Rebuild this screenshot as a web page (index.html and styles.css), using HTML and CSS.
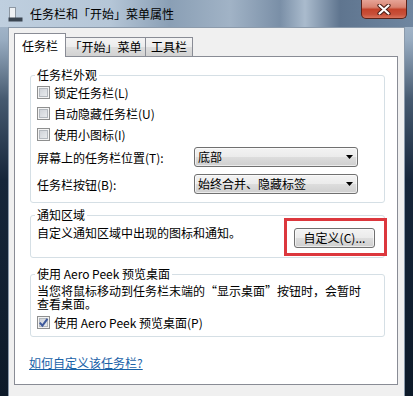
FILE: index.html
```html
<!DOCTYPE html>
<html lang="zh-CN">
<head>
    <meta charset="UTF-8">
    <meta name="viewport" content="width=device-width, initial-scale=1.0">
    <title>任务栏和「开始」菜单属性</title>
    <link rel="stylesheet" href="styles.css">
</head>
<body>
    <div class="window">
        <div class="titlebar">
            <svg class="app-icon" width="15" height="15" viewBox="0 0 15 15">
                <rect x="1.5" y="0.5" width="6" height="11" fill="#eef1f4" stroke="#8d97a2"/>
                <rect x="0.5" y="10.5" width="14" height="4" fill="#3a4551"/>
            </svg>
            <span class="title">任务栏和「开始」菜单属性</span>
            <div class="close-btn">
                <svg width="14" height="11" viewBox="0 0 14 11">
                    <path d="M2.5 1.5 L11.5 9.5 M11.5 1.5 L2.5 9.5" stroke="#4a1c14" stroke-width="4.2" stroke-linecap="round"/>
                    <path d="M2.5 1.5 L11.5 9.5 M11.5 1.5 L2.5 9.5" stroke="#fff" stroke-width="2.2" stroke-linecap="round"/>
                </svg>
            </div>
        </div>

        <div class="client">
            <div class="tabs">
                <div class="tab active">任务栏</div>
                <div class="tab tab-start">「开始」菜单</div>
                <div class="tab tab-tools">工具栏</div>
            </div>

            <div class="panel">
                <!-- 任务栏外观 -->
                <fieldset class="group group-look">
                    <legend>任务栏外观</legend>
                    <div class="check-row"><span class="checkbox"></span>锁定任务栏(L)</div>
                    <div class="check-row"><span class="checkbox"></span>自动隐藏任务栏(U)</div>
                    <div class="check-row"><span class="checkbox"></span>使用小图标(I)</div>
                    <div class="combo-rows">
                        <div class="combo-row">
                            <span class="combo-label">屏幕上的任务栏位置(T):</span>
                            <div class="combo">
                                <span>底部</span>
                                <svg class="arrow" width="7" height="4" viewBox="0 0 7 4"><polygon points="0,0 7,0 3.5,4" fill="#000"/></svg>
                            </div>
                        </div>
                        <div class="combo-row">
                            <span class="combo-label">任务栏按钮(B):</span>
                            <div class="combo">
                                <span>始终合并、隐藏标签</span>
                                <svg class="arrow" width="7" height="4" viewBox="0 0 7 4"><polygon points="0,0 7,0 3.5,4" fill="#000"/></svg>
                            </div>
                        </div>
                    </div>
                </fieldset>

                <!-- 通知区域 -->
                <fieldset class="group group-notify">
                    <legend>通知区域</legend>
                    <div class="notify-row">
                        <span class="notify-text">自定义通知区域中出现的图标和通知。</span>
                        <div class="btn-wrap">
                            <div class="btn">自定义(C)...</div>
                            <div class="highlight"></div>
                        </div>
                    </div>
                </fieldset>

                <!-- Aero Peek -->
                <fieldset class="group group-peek">
                    <legend>使用 Aero Peek 预览桌面</legend>
                    <p class="peek-text">当您将鼠标移动到任务栏末端的“显示桌面”按钮时，会暂时<br>查看桌面。</p>
                    <div class="check-row">
                        <span class="checkbox checked">
                            <svg width="11" height="11" viewBox="0 0 11 11"><path d="M1.8 5.6 L4.4 8.6 L9.4 1.8" fill="none" stroke="#3f5a9c" stroke-width="2"/></svg>
                        </span>使用 Aero Peek 预览桌面(P)
                    </div>
                </fieldset>

                <a class="help-link" href="#">如何自定义该任务栏?</a>
            </div>
        </div>
    </div>
</body>
</html>
```

FILE: styles.css
```css
/* 窗口 */
body {
    margin: 0;
    font-family: "Noto Sans CJK SC", sans-serif;
    font-size: 12px;
    color: #000;
    background: #0e1823;
    overflow: hidden;
}
.window {
    width: 413px;
    height: 396px;
    box-sizing: border-box;
    padding: 0 8px;
    display: flex;
    flex-direction: column;
    background: linear-gradient(to bottom, #b3c4d6 0, #98acc1 40px, #45596f 100px, #16263a 180px, #0d1a29 100%);
}
.titlebar {
    height: 27px;
    margin: 0 -8px;
    padding-left: 8px;
    display: flex;
    align-items: center;
    background: linear-gradient(to right, #bfcfdf 0, #b5c6d7 110px, #8a9fb5 170px, #a1b3c6 230px, #7a8fa7 280px, #aabbcd 305px, #5f758f 340px, #6f86a0 100%);
}
.app-icon {
    margin-top: 1px;
}
.title {
    margin-left: 7px;
    line-height: 14px;
}
.close-btn {
    margin-left: auto;
    margin-right: 6px;
    align-self: flex-start;
    width: 46px;
    height: 19px;
    box-sizing: border-box;
    border: 1px solid #5a2219;
    border-top: none;
    border-radius: 0 0 5px 5px;
    background: linear-gradient(to bottom, #e6a496 0, #d88371 40%, #c4432b 52%, #c8503a 80%, #d8735c 100%);
    display: flex;
    align-items: center;
    justify-content: center;
}

/* 客户区 */
.client {
    flex: 1;
    background: #f0f0f0;
    border: 1px solid #8b9aab;
    border-bottom: none;
    padding: 5px 6px 0 5px;
}
.tabs {
    display: flex;
    align-items: flex-end;
    height: 23px;
}
.tab {
    height: 19px;
    box-sizing: border-box;
    border: 1px solid #898c95;
    border-bottom: none;
    line-height: 18px;
    text-align: center;
    background: linear-gradient(to bottom, #f4f4f4 0, #ececec 50%, #dedede 50%, #d2d2d2 100%);
    margin-left: -1px;
}
.tab.active {
    position: relative;
    z-index: 1;
    height: 24px;
    width: 52px;
    line-height: 23px;
    margin-left: 0;
    margin-bottom: -1px;
    background: #fff;
}
.tab-start {
    width: 81px;
}
.tab-tools {
    width: 48px;
}
.panel {
    height: 329px;
    box-sizing: border-box;
    background: #fff;
    border: 1px solid #898c95;
    padding: 11px 12px 0 15px;
}

/* 分组框 */
.group {
    margin: 0;
    border: 1px solid #d5dfe5;
    border-radius: 3px;
    padding: 0 6px 7px 6px;
}
.group legend {
    padding: 0 2px;
    margin-left: -2px;
    line-height: 14px;
}
.group-notify {
    margin-top: 5px;
    padding: 4px 6px 9px 6px;
}
.group-peek {
    margin-top: 9px;
    padding: 3px 6px 3px 6px;
}
.check-row {
    display: flex;
    align-items: center;
    gap: 4px;
    height: 21px;
}
.checkbox {
    width: 13px;
    height: 13px;
    box-sizing: border-box;
    border: 1px solid #8e8f8f;
    box-shadow: inset 0 0 0 1px #f4f4f4, inset 0 0 0 2px #b3b8be;
    background: linear-gradient(135deg, #c9cdd3 0, #eef0f2 100%);
    display: flex;
    align-items: center;
    justify-content: center;
}
.combo-rows {
    margin-top: 1px;
    display: flex;
    flex-direction: column;
    gap: 5px;
}
.combo-row {
    display: grid;
    grid-template-columns: 157px 164px;
    align-items: center;
    height: 22px;
}
.combo, .btn {
    height: 20px;
    box-sizing: border-box;
    border: 1px solid #707070;
    border-radius: 3px;
    background: linear-gradient(to bottom, #f3f3f3 0, #ebebeb 50%, #dddddd 50%, #cfcfcf 100%);
    box-shadow: inset 0 0 0 1px rgba(255, 255, 255, 0.6);
}
.combo {
    display: flex;
    align-items: center;
    justify-content: space-between;
    padding: 0 4px 0 3px;
    line-height: 18px;
}
.notify-row {
    display: flex;
    align-items: flex-start;
}
.notify-text {
    line-height: 14px;
}
.btn-wrap {
    position: relative;
    margin: 2px 3px 0 auto;
}
.btn {
    width: 81px;
    line-height: 18px;
    text-align: center;
}
.highlight {
    position: absolute;
    left: -10px;
    right: -12px;
    top: -10px;
    bottom: -8px;
    border: 3px solid #dc373d;
}
.peek-text {
    margin: 0;
    line-height: 13px;
}
.group-peek .check-row {
    margin-top: 2px;
}
.help-link {
    display: inline-block;
    margin: 19px 0 0 -1px;
    line-height: 14px;
    color: #1a62a8;
    text-decoration: underline;
}
```
